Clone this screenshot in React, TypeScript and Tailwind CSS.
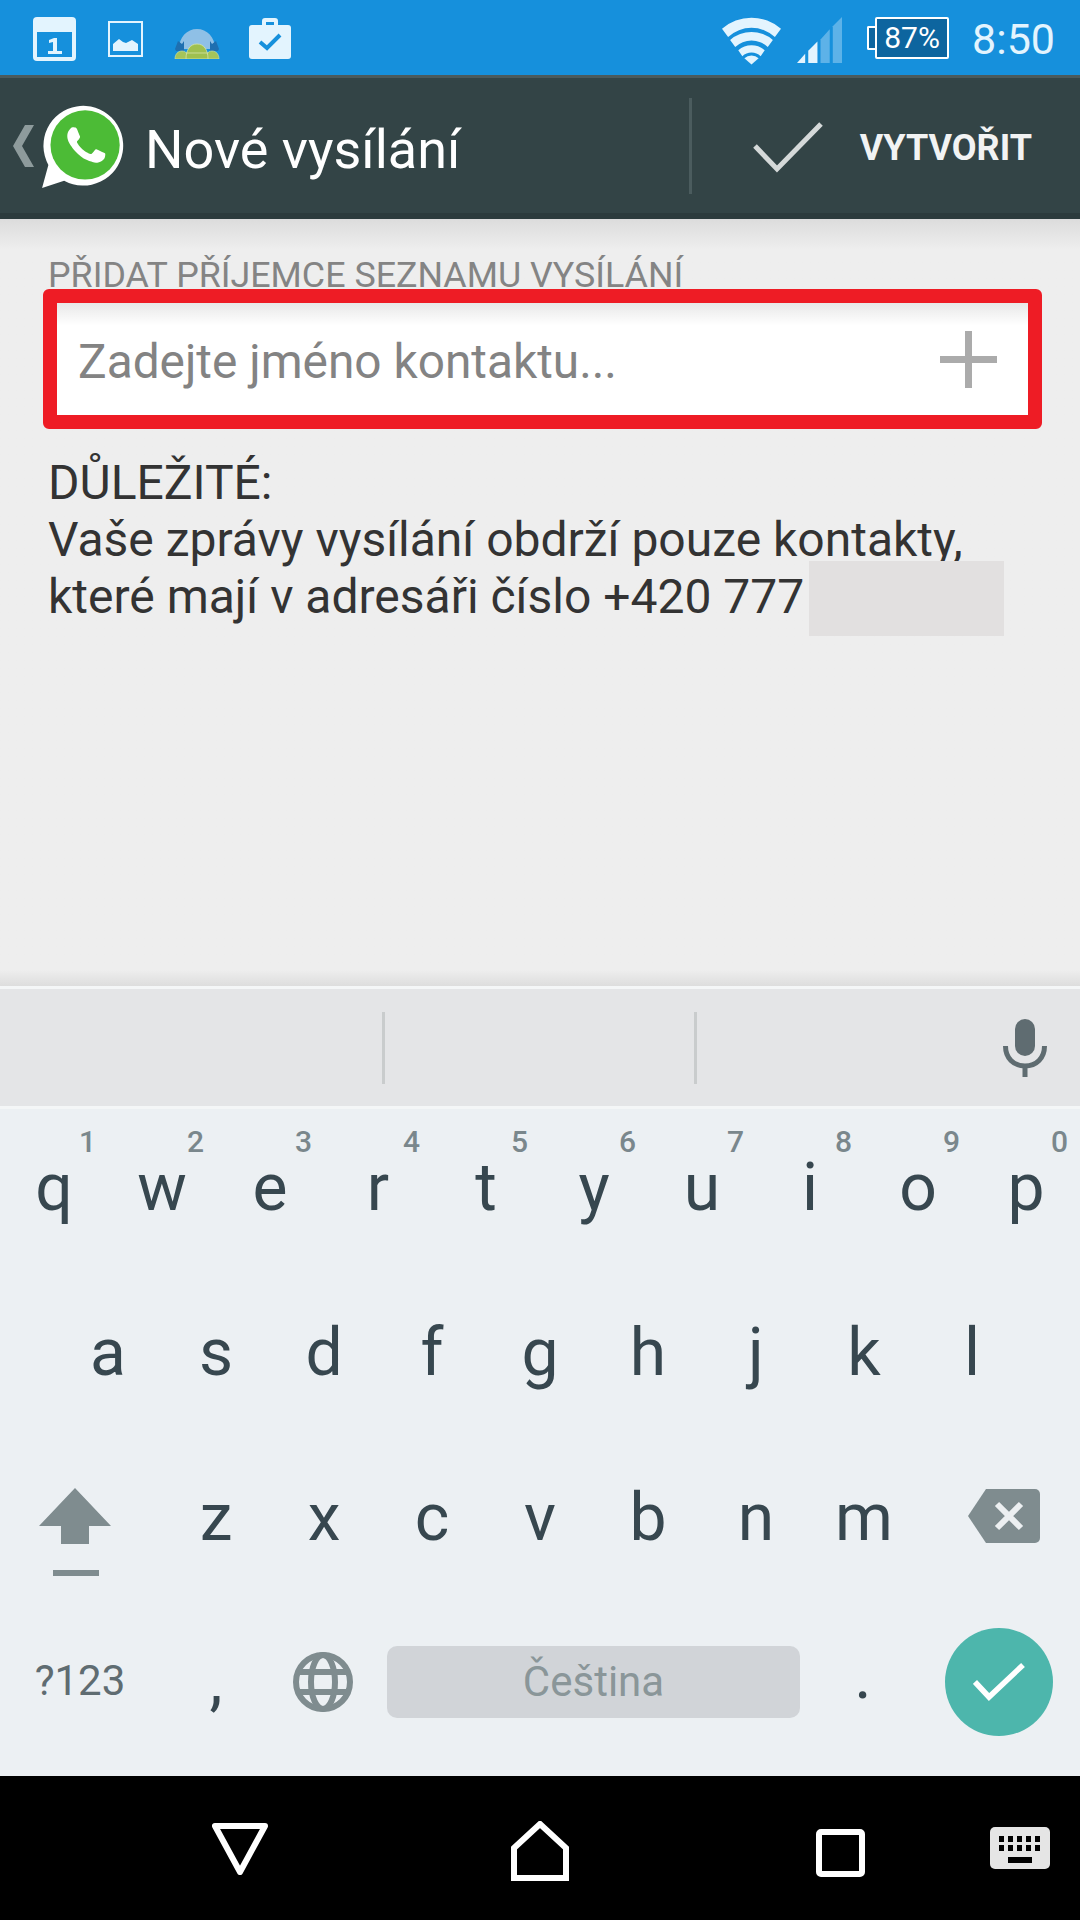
const font = { fontFamily: 'Roboto, sans-serif' }

const rowOne = [
    ['q', '1'], ['w', '2'], ['e', '3'], ['r', '4'], ['t', '5'],
    ['y', '6'], ['u', '7'], ['i', '8'], ['o', '9'], ['p', '0'],
]
const rowTwo = ['a', 's', 'd', 'f', 'g', 'h', 'j', 'k', 'l']
const rowThree = ['z', 'x', 'c', 'v', 'b', 'n', 'm']

function CalendarIcon() {
    return (
        <svg width="43" height="44" viewBox="0 0 43 44" className="ml-[33px]">
            <rect width="43" height="44" rx="4" fill="#e3f4fe" />
            <rect x="4" y="15" width="35" height="25" fill="#1690dc" />
            <path d="M16 23l5-2h3v13h5v3H15v-3h5v-9l-4 1z" fill="#e3f4fe" />
        </svg>
    )
}

function ImageIcon() {
    return (
        <svg width="35" height="36" viewBox="0 0 35 36" className="ml-[32px] mt-[4px]">
            <rect x="1" y="1" width="33" height="34" fill="none" stroke="#e3f4fe" strokeWidth="2" />
            <path d="M5 30V23l6-5 4 3 3 1 6-3 6 4v7z" fill="#e3f4fe" />
        </svg>
    )
}

function AndroidGlobeIcon() {
    return (
        <svg width="46" height="30" viewBox="0 0 46 30" className="ml-[31px] mt-[12px]">
            <path d="M5 20C5 8 13 0 23 0s18 8 18 20z" fill="#8fc0e6" />
            <path d="M1 20l3-8 4 3 2-3v10H2zM45 20l-3-8-4 3-2-3v10h8z" fill="#1e6fb0" />
            <path d="M1 30c0-5 3-8 7-8s6 3 6 8zM32 30c0-5 2-8 6-8s7 3 7 8z" fill="#a5c45a" stroke="#d5e4a8" strokeWidth="0.6" />
            <path d="M12 30c0-9 4-15 11-15s11 6 11 15z" fill="#9fc04f" stroke="#d5e4a8" strokeWidth="0.8" />
            <path d="M12 24h22" stroke="#d5e4a8" strokeWidth="0.8" />
        </svg>
    )
}

function BriefcaseIcon() {
    return (
        <svg width="42" height="42" viewBox="0 0 42 42" className="ml-[29px]">
            <path d="M13 9V4a3 3 0 0 1 3-3h10a3 3 0 0 1 3 3v5h-4V5h-8v4z" fill="#e3f4fe" />
            <rect y="8" width="42" height="34" rx="3" fill="#e3f4fe" />
            <path d="M11 25l7 6 13-13" fill="none" stroke="#1690dc" strokeWidth="4" />
        </svg>
    )
}

function WifiIcon() {
    return (
        <svg width="59" height="50" viewBox="0 0 58 48" className="-mt-[1px]">
            <path d="M0 12a44 44 0 0 1 58 0l-6 8a34 34 0 0 0-46 0z" fill="#e3f4fe" />
            <path d="M8 23a32 32 0 0 1 42 0l-5 7a23 23 0 0 0-32 0z" fill="#e3f4fe" />
            <path d="M16 33a20 20 0 0 1 26 0l-4 6a13 13 0 0 0-18 0z" fill="#e3f4fe" />
            <path d="M22 42a10 10 0 0 1 14 0l-7 6z" fill="#e3f4fe" transform="translate(0 -1)" />
        </svg>
    )
}

function SignalIcon() {
    return (
        <svg width="45" height="46" viewBox="0 0 44 45" className="ml-[16px]">
            <path d="M0 45l8-9v9z" fill="#e3f4fe" />
            <path d="M11 45V33l9-9v21z" fill="#e3f4fe" />
            <path d="M23 45V22l9-10v33z" fill="#e3f4fe" fillOpacity="0.35" />
            <path d="M35 45V9l9-9v45z" fill="#e3f4fe" fillOpacity="0.35" />
        </svg>
    )
}

function StatusBar() {
    return (
        <div className="flex h-[75px] shrink-0 items-start bg-[#1690dc] pt-[17px]">
            <CalendarIcon />
            <ImageIcon />
            <AndroidGlobeIcon />
            <BriefcaseIcon />
            <div className="ml-auto flex items-start">
                <WifiIcon />
                <SignalIcon />
                <div className="ml-[25px] flex h-[42px] items-center">
                    <div className="h-[24px] w-[8px] rounded-l-[2px] border-y-2 border-l-2 border-white bg-[#0d659f]" />
                    <div className="flex h-[42px] w-[74px] items-center justify-center rounded-[2px] border-2 border-white bg-[#0d659f] text-[30px] leading-none text-white">
                        87%
                    </div>
                </div>
                <span className="ml-[23px] mr-[25px] text-[43px] leading-[44px] text-[#e3f4fe]">8:50</span>
            </div>
        </div>
    )
}

function WhatsappLogo() {
    return (
        <svg width="84" height="85" viewBox="0 0 80 81" className="ml-[7px]">
            <path d="M1 81l6-22a38 38 0 1 1 15 15z" fill="#fff" />
            <circle cx="42" cy="40" r="33" fill="#4cbb36" />
            <path
                d="M17.472 14.382c-.297-.149-1.758-.867-2.03-.967-.273-.099-.471-.148-.67.15-.197.297-.767.966-.94 1.164-.173.199-.347.223-.644.075-.297-.15-1.255-.463-2.39-1.475-.883-.788-1.48-1.761-1.653-2.059-.173-.297-.018-.458.13-.606.134-.133.298-.347.446-.52.149-.174.198-.298.298-.497.099-.198.05-.371-.025-.52-.075-.149-.669-1.612-.916-2.207-.242-.579-.487-.5-.669-.51-.173-.008-.371-.01-.57-.01-.198 0-.52.074-.792.372-.272.297-1.04 1.016-1.04 2.479 0 1.462 1.065 2.875 1.213 3.074.149.198 2.096 3.2 5.077 4.487.709.306 1.262.489 1.694.625.712.227 1.36.195 1.871.118.571-.085 1.758-.719 2.006-1.413.248-.694.248-1.289.173-1.413-.074-.124-.272-.198-.57-.347z"
                fill="#fff"
                transform="translate(7 4) scale(3)"
            />
        </svg>
    )
}

function ActionBar() {
    return (
        <div className="flex h-[144px] shrink-0 items-center border-t-[3px] border-b-[6px] border-t-[#4a5a5c] border-b-[#2c3b3d] bg-[#334446]">
            <svg width="21" height="42" viewBox="0 0 21 42" className="ml-[13px]">
                <path d="M12 0h9L9 21l12 21h-9L0 21z" fill="#8e9b9c" />
            </svg>
            <WhatsappLogo />
            <span className="ml-[20px] mt-[9px] text-[54px] leading-none text-white">Nové vysílání</span>
            <div className="ml-auto h-[96px] w-[3px] bg-[#4b5c5e]" />
            <svg width="72" height="52" viewBox="0 0 72 52" className="ml-[60px] mt-[3px]">
                <path d="M3 25l22 23L69 3" fill="none" stroke="#d5d9d9" strokeWidth="5" />
            </svg>
            <span className="ml-[36px] mr-[48px] mt-[4px] text-[36px] leading-none font-bold text-[#f2f3f3]">VYTVOŘIT</span>
        </div>
    )
}

function Content() {
    return (
        <div className="flex h-[767px] shrink-0 flex-col bg-[#eeeeee] bg-linear-to-b from-[#dcdcdc] from-0% to-[#eeeeee] to-[4%] pl-[43px] pr-[38px]">
            <p className="mt-[43px] ml-[5px] text-[35.8px] leading-[27px] text-[#848484]">PŘIDAT PŘÍJEMCE SEZNAMU VYSÍLÁNÍ</p>
            <div className="flex h-[140px] items-center rounded-[6px] border-[14px] border-[#ee1c25] bg-white bg-linear-to-b from-[#e8e8e8] from-0% to-white to-[20%] pl-[21px] pr-[31px]">
                <span className="mt-[8px] text-[47.8px] leading-none text-[#838383]">Zadejte jméno kontaktu...</span>
                <svg width="57" height="57" viewBox="0 0 57 57" className="ml-auto mt-[1px]">
                    <path d="M28.5 0v57M0 28.5h57" stroke="#ababab" strokeWidth="7" />
                </svg>
            </div>
            <div className="mt-[25px] ml-[5px] text-[48px] leading-[57px] text-[#333333]">
                <p>DŮLEŽITÉ:</p>
                <p className="whitespace-nowrap">Vaše zprávy vysílání obdrží pouze kontakty,</p>
                <p className="flex items-start whitespace-nowrap">
                    které mají v adresáři číslo +420 777
                    <span className="-mt-[7px] ml-[5px] h-[75px] w-[195px] bg-[#e2e0e0]" />
                </p>
            </div>
            <div className="-ml-[43px] -mr-[38px] mt-auto h-[16px] bg-linear-to-b from-[#eeeeee] to-[#dddddd]" />
        </div>
    )
}

function SuggestionStrip() {
    return (
        <div className="flex h-[123px] shrink-0 items-center border-y-[3px] border-y-[#f4f6f7] bg-[#e4e5e7]">
            <div className="ml-[382px] h-[72px] w-[3px] bg-[#c9cccd]" />
            <div className="ml-[309px] h-[72px] w-[3px] bg-[#c9cccd]" />
            <svg width="44" height="58" viewBox="0 0 44 58" className="ml-auto mr-[33px]">
                <rect x="12" y="0" width="20" height="37" rx="10" fill="#5f6c71" />
                <path d="M2.5 27c0 12 8 20 19.500 20s19.500-8 19.500-20M22 46v12" fill="none" stroke="#5f6c71" strokeWidth="5" />
            </svg>
        </div>
    )
}

function LetterKey({ letter, hint, className }: { letter: string; hint?: string; className: string }) {
    return (
        <div className={`relative flex justify-center pt-[46px] text-[66px] leading-none text-[#37474f] ${className}`}>
            {hint && <span className="absolute right-[12px] top-[18px] text-[30px] leading-none font-medium text-[#7a878c]">{hint}</span>}
            {letter}
        </div>
    )
}

function ShiftIcon() {
    return (
        <svg width="72" height="88" viewBox="0 0 72 88">
            <path d="M36 0l36 38H50v18H22V38H0z" fill="#7f8c8f" />
            <rect x="14" y="82" width="46" height="6" fill="#7f8c8f" />
        </svg>
    )
}

function BackspaceIcon() {
    return (
        <svg width="72" height="54" viewBox="0 0 72 54">
            <path d="M18 0h49a5 5 0 0 1 5 5v44a5 5 0 0 1-5 5H18L0 27z" fill="#7f8c8f" />
            <path d="M29 15l24 24M53 15L29 39" stroke="#eceff1" strokeWidth="6" />
        </svg>
    )
}

function GlobeIcon() {
    return (
        <svg width="60" height="60" viewBox="0 0 60 60">
            <g fill="none" stroke="#7f8c8f" strokeWidth="6">
                <circle cx="30" cy="30" r="27" />
                <ellipse cx="30" cy="30" rx="12" ry="27" />
                <path d="M5 20h50M5 40h50" />
            </g>
        </svg>
    )
}

function Keyboard() {
    return (
        <div className="flex flex-1 flex-col bg-[#ecf0f3]">
            <div className="flex h-[165px]">
                {rowOne.map(([l, h]) => <LetterKey key={l} letter={l} hint={h} className="w-[108px]" />)}
            </div>
            <div className="flex h-[165px] pl-[54px]">
                {rowTwo.map((l) => <LetterKey key={l} letter={l} className="w-[108px]" />)}
            </div>
            <div className="flex h-[165px]">
                <div className="flex w-[162px] justify-center pt-[49px] pr-[12px]"><ShiftIcon /></div>
                {rowThree.map((l) => <LetterKey key={l} letter={l} className="w-[108px]" />)}
                <div className="flex flex-1 justify-center pt-[50px] pl-[10px]"><BackspaceIcon /></div>
            </div>
            <div className="flex flex-1 items-center pb-[16px]">
                <span className="w-[162px] pb-[2px] pr-[2px] text-center text-[42px] leading-none text-[#5f6c71]">?123</span>
                <span className="w-[108px] pb-[2px] text-center text-[66px] leading-none text-[#37474f]">,</span>
                <div className="flex w-[117px] justify-center pr-[11px]"><GlobeIcon /></div>
                <div className="flex h-[72px] w-[413px] items-center justify-center rounded-[10px] bg-[#d1d4d8] text-[42px] leading-none text-[#8a9699]">Čeština</div>
                <span className="w-[126px] pb-[12px] text-center text-[66px] leading-none text-[#37474f]">.</span>
                <div className="ml-[19px] flex h-[108px] w-[108px] items-center justify-center rounded-full bg-[#4db6ac]">
                    <svg width="52" height="40" viewBox="0 0 52 40">
                        <path d="M2 20l14 15L50 3" fill="none" stroke="#fff" strokeWidth="5.5" />
                    </svg>
                </div>
            </div>
        </div>
    )
}

function NavBar() {
    return (
        <div className="flex h-[144px] shrink-0 items-start bg-black">
            <svg width="56" height="52" viewBox="0 0 56 52" className="ml-[212px] mt-[47px]">
                <path d="M3 3h50L28 49z" fill="none" stroke="#fff" strokeWidth="6" strokeLinejoin="round" />
            </svg>
            <svg width="58" height="60" viewBox="0 0 58 60" className="ml-[243px] mt-[45px]">
                <path d="M3 27L29 3l26 24v30H3z" fill="none" stroke="#fff" strokeWidth="6" />
            </svg>
            <svg width="49" height="48" viewBox="0 0 49 48" className="ml-[247px] mt-[53px]">
                <rect x="3" y="3" width="43" height="42" rx="2" fill="none" stroke="#fff" strokeWidth="6" />
            </svg>
            <svg width="60" height="42" viewBox="0 0 60 42" className="ml-[125px] mt-[51px]">
                <rect width="60" height="42" rx="5" fill="#e5e5e5" />
                <path
                    d="M9 9h5v6H9zM18 9h5v6h-5zM27 9h5v6h-5zM36 9h5v6h-5zM45 9h5v6h-5zM9 18h5v6H9zM18 18h5v6h-5zM27 18h5v6h-5zM36 18h5v6h-5zM45 18h5v6h-5zM18 30h24v6H18z"
                    fill="#000"
                />
            </svg>
        </div>
    )
}

export default function App() {
    return (
        <div className="flex h-[1920px] w-[1080px] flex-col overflow-hidden" style={font}>
            <StatusBar />
            <ActionBar />
            <Content />
            <SuggestionStrip />
            <Keyboard />
            <NavBar />
        </div>
    )
}
